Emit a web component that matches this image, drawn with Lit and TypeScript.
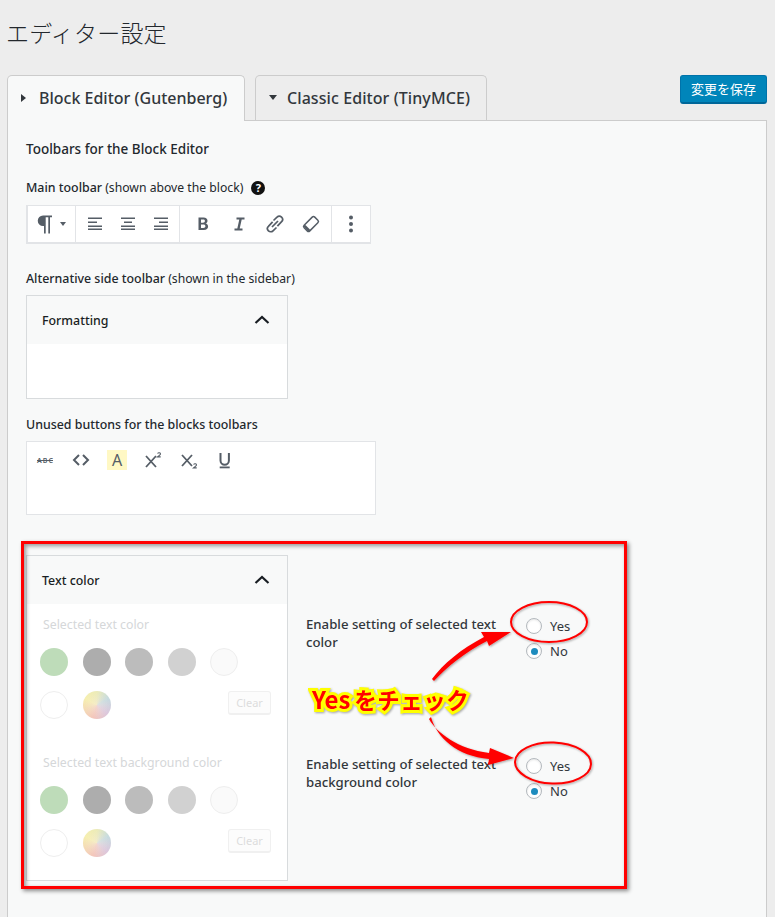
import { LitElement, html, css, svg } from "lit";
import { customElement } from "lit/decorators.js";

const ic = (body: unknown, size = 20, vb = "0 0 20 20") =>
  html`<svg class="ic" width=${size} height=${size} viewBox=${vb}>${body}</svg>`;

const alignL = svg`<path d="M3 3.500h14v1.600H3zM3 7.500h9v1.600H3zM3 11.500h14v1.600H3zM3 14.600h14v1.400H3z" fill="#555d66"/>`;
const alignC = svg`<path d="M3 3.500h14v1.600H3zM6 7.500h8v1.600H6zM3 11.500h14v1.600H3zM3 14.600h14v1.400H3z" fill="#555d66"/>`;
const alignR = svg`<path d="M3 3.500h14v1.600H3zM8 7.500h9v1.600H8zM3 11.500h14v1.600H3zM3 14.600h14v1.400H3z" fill="#555d66"/>`;

const swatchRow1 = ["s-green", "s-g1", "s-g2", "s-g3", "s-g4"];

@customElement("app-root")
export class AppRoot extends LitElement {
  static styles = css`
    :host {
      display: block;
      position: relative;
      width: 775px;
      height: 917px;
      overflow: hidden;
      background: #ededed;
      color: #23282d;
      font-family: "Noto Sans", "Open Sans", "Noto Sans CJK JP", sans-serif;
      font-size: 13px;
    }
    h1 {
      margin: 0;
      padding: 16px 0 0 6px;
      height: 75px;
      box-sizing: border-box;
      font: 300 23px/33px "Noto Sans CJK JP", sans-serif;
      letter-spacing: 0.2px;
      color: #23282d;
    }
    .tabs {
      display: flex;
      align-items: flex-start;
      height: 45px;
      padding: 0 8px 0 7px;
      position: relative;
      z-index: 1;
    }
    .tab {
      box-sizing: border-box;
      border: 1px solid #ccc;
      border-bottom: none;
      border-radius: 5px 5px 0 0;
      display: flex;
      align-items: center;
      font-size: 16px;
      font-weight: 500;
      color: #32373c;
    }
    .tab.active {
      width: 238px;
      background: #f8f9f9;
      padding: 0 0 2px 13px;
      height: 46px;
    }
    .tab.other {
      width: 232px;
      height: 45px;
      margin-left: 10px;
      padding: 0 0 1px 13px;
      background: #ededed;
      letter-spacing: 0.08px;
    }
    .tri {
      width: 0;
      height: 0;
      margin-right: 13px;
    }
    .tri.right {
      border-left: 5px solid #32373c;
      border-top: 4px solid transparent;
      border-bottom: 4px solid transparent;
    }
    .tri.down {
      border-top: 5px solid #32373c;
      border-left: 4px solid transparent;
      border-right: 4px solid transparent;
      margin-right: 10px;
    }
    .save {
      margin-left: auto;
      width: 87px;
      height: 29px;
      box-sizing: border-box;
      background: #0085ba;
      border: 1px solid #0073aa;
      border-bottom: 2px solid #006799;
      border-radius: 3px;
      color: #fff;
      font: 400 13px/24px "Noto Sans CJK JP", sans-serif;
      padding: 0;
      text-align: center;
    }
    .panel {
      box-sizing: border-box;
      margin: 0 8px 0 7px;
      height: 830px;
      border: 1px solid #ccc;
      background: #f8f9f9;
      padding: 19px 18px 0;
    }
    .h {
      font-weight: 500;
      font-size: 13.5px;
      line-height: 18px;
      color: #23282d;
    }
    .lbl {
      font-size: 12.4px;
      line-height: 18px;
      color: #23282d;
      font-weight: 500;
      display: flex;
      align-items: center;
    }
    .lbl span {
      font-weight: 400;
      font-size: 12.2px;
      white-space: pre;
    }
    .help {
      width: 14px;
      height: 14px;
      border-radius: 50%;
      background: #111;
      color: #fff;
      font-size: 11px;
      font-weight: 700;
      line-height: 14px;
      text-align: center;
      margin-left: 8px;
    }
    .main-lbl {
      margin-top: 21px;
    }
    .toolbar {
      box-sizing: border-box;
      margin-top: 8px;
      width: 345px;
      height: 39px;
      display: flex;
      background: #fff;
      border: 2px solid #e2e4e7;
      border-top-width: 1px;
      border-right-width: 1px;
    }
    .group {
      display: flex;
      align-items: center;
      border-right: 1px solid #e2e4e7;
      box-sizing: border-box;
    }
    .g1 { width: 48px; padding-left: 7px; }
    .g2 { width: 104px; padding-left: 9px; gap: 13px; }
    .g3 { width: 152px; padding-left: 13px; gap: 16px; }
    .g4 { flex: 1; border: none; justify-content: center; }
    .ic { display: block; flex: none; }
    .caret {
      width: 0;
      height: 0;
      margin-left: 5px;
      border-top: 4px solid #555d66;
      border-left: 3px solid transparent;
      border-right: 3px solid transparent;
    }
    .alt-lbl { margin-top: 26px; }
    .box {
      box-sizing: border-box;
      width: 262px;
      border: 1px solid #d8dbdd;
      background: #fff;
    }
    .alt-box {
      margin-top: 7px;
      height: 104px;
    }
    .box-head {
      height: 48px;
      background: #f8f9f9;
      display: flex;
      align-items: center;
      justify-content: space-between;
      padding: 0 15px;
      font-weight: 500;
      font-size: 12.4px;
      color: #191e23;
    }
    .unused-lbl { margin-top: 17px; }
    .unused {
      box-sizing: border-box;
      margin-top: 7px;
      width: 350px;
      height: 74px;
      border: 1px solid #e2e4e7;
      background: #fff;
      padding: 8px 0 0 8px;
      display: flex;
      align-items: flex-start;
      gap: 16px;
    }
    .ub {
      width: 20px;
      height: 20px;
      display: flex;
      align-items: center;
      justify-content: center;
      color: #555d66;
    }
    .ub.hi { background: #fff8c4; font-size: 16px; }
    .color-row {
      display: flex;
      margin-top: 40px;
      height: 326px;
    }
    .color-box { height: 326px; }
    .group-lbl {
      color: #d5d7d9;
      font-size: 12.3px;
      line-height: 18px;
      padding-left: 16px;
      margin-top: 12px;
    }
    .swatches {
      display: grid;
      grid-template-columns: repeat(5, 28px);
      column-gap: 14.6px;
      row-gap: 15px;
      padding: 14px 0 0 13px;
      position: relative;
    }
    .sw {
      width: 28px;
      height: 28px;
      border-radius: 50%;
      box-sizing: border-box;
    }
    .s-green { background: #bedcb9; }
    .s-g1 { background: #adadad; }
    .s-g2 { background: #bcbcbc; }
    .s-g3 { background: #d1d1d1; }
    .s-g4 { background: #fafafa; border: 1px solid #eee; }
    .s-w { background: #fff; border: 1px solid #eee; }
    .s-grad {
      background:
        radial-gradient(circle at 50% 50%, rgba(245, 235, 225, 0.5), rgba(245, 235, 225, 0) 65%),
        conic-gradient(from 300deg, #f6efb0, #ecebb8 60deg, #c6dbe0 120deg, #dcc8dd 190deg, #f3c6bc 255deg, #f6efb0);
    }
    .clear {
      position: absolute;
      left: 201px;
      top: 57px;
      width: 43px;
      height: 24px;
      box-sizing: border-box;
      border: 1px solid #f0f0f0;
      border-bottom-width: 2px;
      border-radius: 3px;
      background: #fcfcfc;
      color: #dcdcdc;
      font-size: 11px;
      font-weight: 400;
      line-height: 21px;
      text-align: center;
    }
    .group-2 { margin-top: 35px; }
    .opts {
      width: 300px;
      margin-left: 18px;
      padding-top: 60px;
      box-sizing: border-box;
    }
    .opt {
      display: flex;
      height: 140px;
    }
    .opt-lbl {
      width: 220px;
      font-weight: 500;
      font-size: 13.2px;
      line-height: 18px;
      color: #32373c;
    }
    .radios {
      display: flex;
      flex-direction: column;
      gap: 7px;
      padding-top: 2px;
    }
    .r {
      display: flex;
      align-items: center;
      gap: 8px;
      height: 18px;
      font-size: 13px;
      color: #32373c;
    }
    .dot {
      width: 16px;
      height: 16px;
      box-sizing: border-box;
      border-radius: 50%;
      background: #fff;
      border: 1px solid #b4b9be;
      box-shadow: inset 0 1px 2px rgba(0, 0, 0, 0.1);
      display: flex;
      align-items: center;
      justify-content: center;
    }
    .dot.on::after {
      content: "";
      width: 7px;
      height: 7px;
      border-radius: 50%;
      background: #1e8cbe;
    }
    .frame {
      position: absolute;
      left: 21px;
      top: 541px;
      width: 606px;
      height: 348px;
      box-sizing: border-box;
      border: 3px solid #f00;
      box-shadow: 2px 2px 4px rgba(0, 0, 0, 0.45), inset 2px 2px 4px rgba(0, 0, 0, 0.4);
      pointer-events: none;
    }
    .marks {
      position: absolute;
      left: 0;
      top: 0;
      pointer-events: none;
    }
    .callout {
      position: absolute;
      left: 312px;
      top: 683px;
      font: 700 22.5px/32px "Noto Sans CJK JP", sans-serif;
      color: #f00;
      white-space: nowrap;
      -webkit-text-stroke: 6px #ff0;
      paint-order: stroke fill;
      letter-spacing: 0.5px;
      filter: drop-shadow(1px 1px 1px rgba(0, 0, 0, 0.35));
    }
    .callout b {
      font-size: 24px;
      font-weight: 700;
      letter-spacing: 0;
      margin-right: 4px;
    }
  `;

  private swatches() {
    return html`<div class="swatches">
      ${swatchRow1.map((c) => html`<div class="sw ${c}"></div>`)}
      <div class="sw s-w"></div>
      <div class="sw s-grad"></div>
      <div class="clear">Clear</div>
    </div>`;
  }

  private option(label: string) {
    return html`<div class="opt">
      <div class="opt-lbl">${label}</div>
      <div class="radios">
        <div class="r"><div class="dot"></div>Yes</div>
        <div class="r"><div class="dot on"></div>No</div>
      </div>
    </div>`;
  }

  private chevron() {
    return ic(svg`<path d="M3.500 13 10 7l6.500 6" fill="none" stroke="#191e23" stroke-width="2.200"/>`, 20);
  }

  render() {
    return html`
      <h1>エディター設定</h1>
      <div class="tabs">
        <div class="tab active"><i class="tri right"></i>Block Editor (Gutenberg)</div>
        <div class="tab other"><i class="tri down"></i>Classic Editor (TinyMCE)</div>
        <button class="save">変更を保存</button>
      </div>
      <div class="panel">
        <div class="h">Toolbars for the Block Editor</div>
        <div class="lbl main-lbl">Main toolbar<span> (shown above the block)</span><div class="help">?</div></div>
        <div class="toolbar">
          <div class="group g1">
            ${ic(svg`<path d="M17 1.500H8a5 5 0 0 0 0 10.500h1v7.500h1.700V3.300h2.600V19.500H15V3.300h2z" fill="#555d66"/>`, 20)}
            <i class="caret"></i>
          </div>
          <div class="group g2">${ic(alignL)}${ic(alignC)}${ic(alignR)}</div>
          <div class="group g3">
            ${ic(svg`<path d="M5.500 3.500h5c2.600 0 4 1.300 4 3.200 0 1.400-.8 2.400-2 2.800 1.600.3 2.600 1.400 2.600 3.100 0 2.200-1.600 3.400-4.200 3.400H5.500zM8 5.600v3.100h2c1.200 0 1.900-.5 1.900-1.600S11.200 5.600 10 5.600zm0 5v3.300h2.300c1.300 0 2.100-.6 2.100-1.700s-.8-1.600-2.100-1.600z" fill="#555d66"/>`)}
            ${ic(svg`<path d="M7.500 3.500h8v2h-2.800l-2 9h2.800v2h-8v-2h2.800l2-9H7.500z" fill="#555d66"/>`)}
            ${ic(svg`<g fill="none" stroke="#555d66" stroke-width="1.700"><path d="M8.500 6.500 12 3.200a3.200 3.200 0 0 1 4.600 4.500l-4.200 4.500"/><path d="M11.500 13.500 8 16.800a3.200 3.200 0 0 1-4.600-4.500l4.200-4.500"/><path d="M7 13l6-6"/></g>`)}
            ${ic(svg`<rect x="2.500" y="6" width="15" height="8" rx="1.800" transform="rotate(-45 10 10)" fill="#fff" stroke="#555d66" stroke-width="1.500"/><path d="M4.500 11.500 8.500 15.500" transform="translate(-.6 .6)" stroke="#555d66" stroke-width="2.200" stroke-linecap="round"/>`)}
          </div>
          <div class="group g4">
            ${ic(svg`<circle cx="10" cy="3.500" r="2" fill="#555d66"/><circle cx="10" cy="10" r="2" fill="#555d66"/><circle cx="10" cy="16.500" r="2" fill="#555d66"/>`)}
          </div>
        </div>

        <div class="lbl alt-lbl">Alternative side toolbar<span> (shown in the sidebar)</span></div>
        <div class="box alt-box">
          <div class="box-head">Formatting${this.chevron()}</div>
        </div>

        <div class="lbl unused-lbl">Unused buttons for the blocks toolbars</div>
        <div class="unused">
          <div class="ub">${ic(svg`<text x="2" y="13" font-family="Noto Sans, sans-serif" font-size="7" font-weight="600" fill="#555d66" textLength="16">ABC</text><path d="M2 10h16v1H2z" fill="#555d66"/>`)}</div>
          <div class="ub">${ic(svg`<path d="M8 5 3 10l5 5M12 5l5 5-5 5" fill="none" stroke="#555d66" stroke-width="2"/>`)}</div>
          <div class="ub hi">A</div>
          <div class="ub">${ic(svg`<path d="M3 6l10 11M13 6 3 17" fill="none" stroke="#555d66" stroke-width="1.800"/><path d="M14.500 3.500c1-1.200 3-.8 3 .4 0 1-1.500 1.700-3 3h3.200" fill="none" stroke="#555d66" stroke-width="1.100"/>`)}</div>
          <div class="ub">${ic(svg`<path d="M3 5l10 11M13 5 3 16" fill="none" stroke="#555d66" stroke-width="1.800"/><path d="M14.500 14.500c1-1.200 3-.8 3 .4 0 1-1.500 1.700-3 3h3.200" fill="none" stroke="#555d66" stroke-width="1.100"/>`)}</div>
          <div class="ub">${ic(svg`<path d="M5.500 3v7.500a4.200 4.200 0 0 0 8.400 0V3" fill="none" stroke="#555d66" stroke-width="2"/><path d="M4.700 16.500h10v1.800h-10z" fill="#555d66"/>`)}</div>
        </div>

        <div class="color-row">
          <div class="box color-box">
            <div class="box-head">Text color${this.chevron()}</div>
            <div class="group-lbl">Selected text color</div>
            ${this.swatches()}
            <div class="group-lbl group-2">Selected text background color</div>
            ${this.swatches()}
          </div>
          <div class="opts">
            ${this.option("Enable setting of selected text color")}
            ${this.option("Enable setting of selected text background color")}
          </div>
        </div>
      </div>

      <div class="frame"></div>
      <svg class="marks" width="775" height="917" viewBox="0 0 775 917">
        <defs>
          <filter id="sh" x="-20%" y="-20%" width="140%" height="140%">
            <feDropShadow dx="1" dy="1" stdDeviation="1" flood-color="#000" flood-opacity=".35"/>
          </filter>
        </defs>
        <g filter="url(#sh)">
          <ellipse cx="549" cy="622" rx="38" ry="20" fill="none" stroke="#f00" stroke-width="2"/>
          <ellipse cx="553" cy="763" rx="38" ry="20.500" fill="none" stroke="#f00" stroke-width="2" transform="rotate(2 553 763)"/>
          <path d="M432 679C443 664 461 649 484 637L481 632L511 632L489 646L487 641C464 653 447 667 434 681Z" fill="#f00"/>
          <path d="M429 719C437 733 458 749 489 753L490 748L514 758L488 765L489 759C457 756 437 738 431 717Z" fill="#f00"/>
        </g>
      </svg>
      <div class="callout"><b>Yes</b>をチェック</div>
    `;
  }
}
